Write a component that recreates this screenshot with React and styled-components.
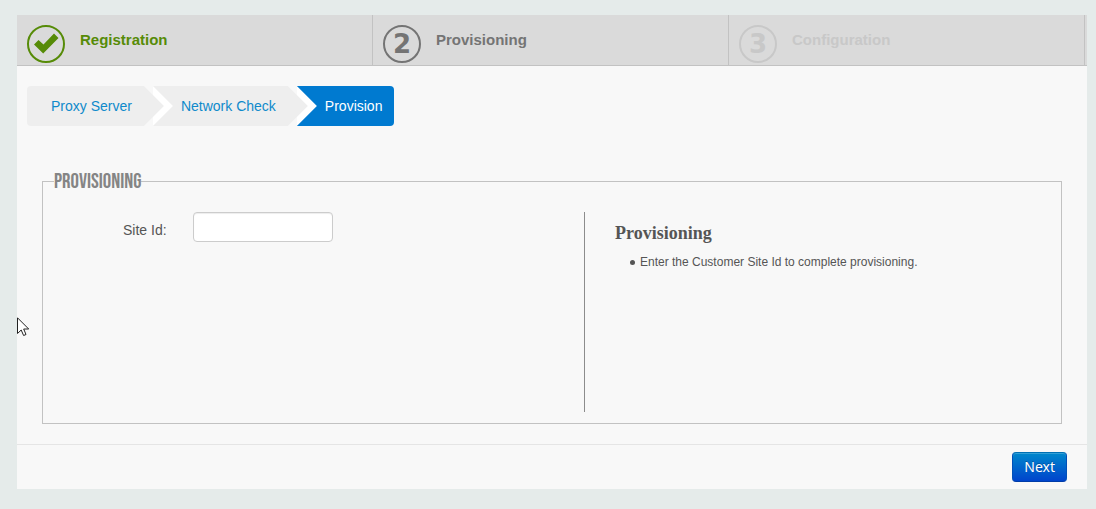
import React from "react";
import styled, { createGlobalStyle, css } from "styled-components";

const GlobalStyle = createGlobalStyle`
  *, *::before, *::after { box-sizing: border-box; }
  body {
    margin: 0;
    background: #e5ebea;
    color: #555;
    font: 14px/20px "Liberation Sans", Arial, sans-serif;
  }
`;

const Page = styled.div`
  position: relative;
  padding: 15px 9px 20px 17px;
`;

const Panel = styled.main`
  background: #f8f8f8;
`;

const Steps = styled.ol`
  display: grid;
  grid-template-columns: repeat(3, 1fr);
  margin: 0;
  padding: 0 2px 0 0;
  list-style: none;
  background: #dadada;
  border-bottom: 1px solid #c2c2c2;
`;

const stepColors = { done: "#568b07", current: "#747474", pending: "#c8c8c8" };

const Step = styled.li`
  display: flex;
  gap: 15px;
  height: 50px;
  padding: 10px 10px 0;
  border-right: 1px solid #c2c2c2;
  color: ${({ $state }) => stepColors[$state]};
`;

const StepBadge = styled.span`
  display: flex;
  flex: none;
  align-items: center;
  justify-content: center;
  width: 38px;
  height: 38px;
  border: 2px solid currentColor;
  border-radius: 50%;
  font: bold 26px/34px "DejaVu Sans", Verdana, sans-serif;
`;

const StepTitle = styled.span`
  padding-top: 5px;
  font-size: 15px;
  font-weight: bold;
`;

const Crumbs = styled.ol`
  display: flex;
  gap: 9px;
  margin: 0;
  padding: 20px 10px 0;
  list-style: none;
`;

const arrow = css`
  content: "";
  position: absolute;
  top: 0;
  z-index: 1;
  width: 20px;
  height: 40px;
  clip-path: polygon(0 0, 100% 50%, 0 100%);
`;

const Crumb = styled.li`
  position: relative;
  background: ${({ $active }) => ($active ? "#007ad0" : "#eee")};

  &:first-child { border-radius: 4px 0 0 4px; }
  &:last-child { border-radius: 0 4px 4px 0; }

  &:not(:last-child)::before {
    ${arrow}
    left: calc(100% + 9px);
    background: #fff;
  }
  &:not(:last-child)::after {
    ${arrow}
    left: 100%;
    background: #eee;
  }
`;

const CrumbLink = styled.a`
  display: block;
  padding: 0 12px 0 28px;
  line-height: 40px;
  text-decoration: none;
  color: ${({ $active }) => ($active ? "#fff" : "#0f8acb")};

  ${Crumb}:first-child & { padding-left: 24px; }
`;

const Fieldset = styled.fieldset`
  display: grid;
  grid-template-columns: 541px 1fr;
  min-width: 0;
  margin: 43px 25px 20px;
  padding: 19px 0 11px;
  border: 1px solid #c2c2c2;
`;

const Legend = styled.legend`
  margin-left: 11px;
  padding: 2px 0 0;
  color: #858585;
  font: 21px/22px "Bebas Neue", "Liberation Sans Narrow", "Liberation Sans", sans-serif;
  text-transform: uppercase;
`;

const Field = styled.div`
  display: flex;
  align-items: flex-start;
  gap: 26px;
  padding-left: 80px;
`;

const Label = styled.label`
  padding-top: 8px;
`;

const TextInput = styled.input`
  width: 140px;
  height: 30px;
  padding: 4px 6px;
  border: 1px solid #ccc;
  border-radius: 4px;
  background: #fff;
  box-shadow: inset 0 1px 1px rgba(0, 0, 0, 0.075);
  color: inherit;
  font: inherit;
`;

const Help = styled.section`
  min-height: 200px;
  padding: 10px 30px 0;
  border-left: 1px solid #8c8c8c;
`;

const HelpTitle = styled.h2`
  margin: 0;
  font: bold 18px/22px "Liberation Serif", "Times New Roman", serif;
`;

const HelpList = styled.ul`
  margin: 8px 0 0;
  padding: 0 0 0 15px;
  list-style: none;
  font-size: 12px;
`;

const HelpItem = styled.li`
  display: flex;
  gap: 5px;

  &::before {
    content: "";
    flex: none;
    width: 5px;
    height: 5px;
    margin-top: 8px;
    border-radius: 50%;
    background: currentColor;
  }
`;

const Footer = styled.footer`
  display: flex;
  justify-content: flex-end;
  padding: 7px 20px;
  border-top: 1px solid #e5e5e5;
`;

const NextButton = styled.button`
  height: 30px;
  padding: 0 11px;
  border: 1px solid;
  border-color: #0070b4 #0050b8 #003ca8;
  border-radius: 4px;
  background: linear-gradient(#08c, #04c);
  box-shadow: inset 0 1px 0 rgba(255, 255, 255, 0.2);
  color: #fff;
  font: 14px/20px "Noto Sans", "Open Sans", sans-serif;
  text-shadow: 0 -1px 0 rgba(0, 0, 0, 0.25);
`;

const Pointer = styled.svg`
  position: absolute;
  top: 317px;
  left: 17px;
  pointer-events: none;
`;

const CheckMark = () => (
  <svg width="34" height="34" viewBox="0 0 34 34" aria-hidden="true">
    <path d="M5 17.500L9.500 13L14.500 17.500L25 6.500L29.500 11L14.200 26.500Z" fill="currentColor" />
  </svg>
);

const steps = [
  { title: "Registration", state: "done", badge: <CheckMark /> },
  { title: "Provisioning", state: "current", badge: "2" },
  { title: "Configuration", state: "pending", badge: "3" },
];

const crumbs = ["Proxy Server", "Network Check", "Provision"];

export default function App() {
  return (
    <Page>
      <GlobalStyle />
      <Panel>
        <Steps>
          {steps.map(({ title, state, badge }) => (
            <Step key={title} $state={state}>
              <StepBadge>{badge}</StepBadge>
              <StepTitle>{title}</StepTitle>
            </Step>
          ))}
        </Steps>
        <nav>
          <Crumbs>
            {crumbs.map((name) => (
              <Crumb key={name} $active={name === "Provision"}>
                <CrumbLink href="#" $active={name === "Provision"}>{name}</CrumbLink>
              </Crumb>
            ))}
          </Crumbs>
        </nav>
        <form>
          <Fieldset>
            <Legend>Provisioning</Legend>
            <Field>
              <Label htmlFor="site-id">Site Id:</Label>
              <TextInput id="site-id" type="text" />
            </Field>
            <Help>
              <HelpTitle>Provisioning</HelpTitle>
              <HelpList>
                <HelpItem>Enter the Customer Site Id to complete provisioning.</HelpItem>
              </HelpList>
            </Help>
          </Fieldset>
          <Footer>
            <NextButton type="button">Next</NextButton>
          </Footer>
        </form>
      </Panel>
      <Pointer width="13" height="20" viewBox="0 0 13 20" aria-hidden="true">
        <path
          d="M0.500 0.800V16.500L4.200 13L6.600 18.500L9 17.500L6.700 12H11.700Z"
          fill="#fff"
          stroke="#222"
        />
      </Pointer>
    </Page>
  );
}
